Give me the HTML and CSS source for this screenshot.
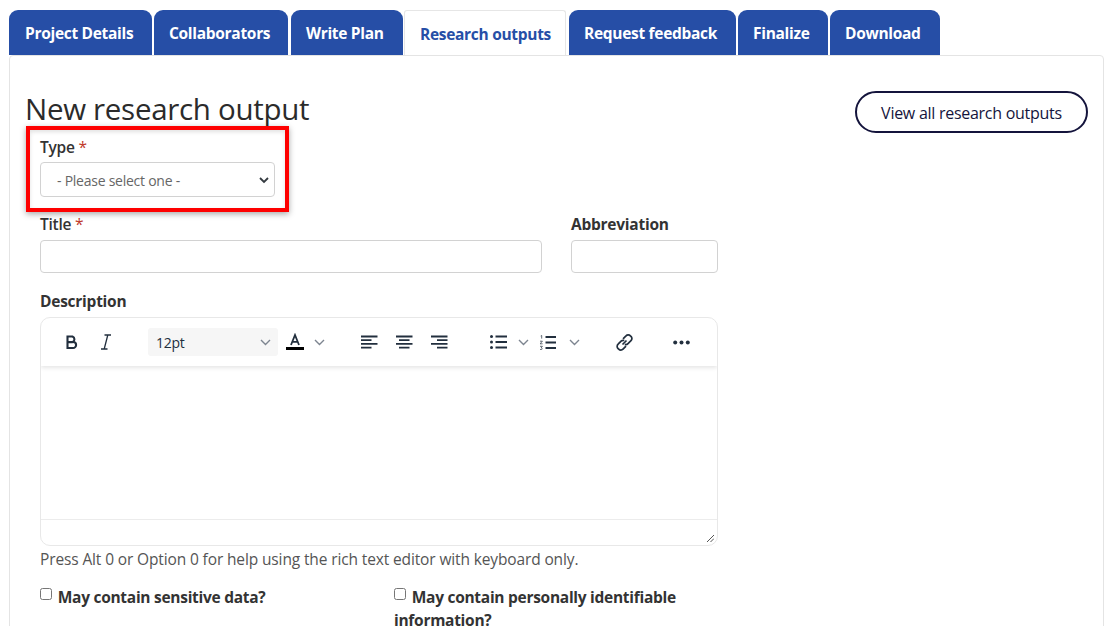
FILE: index.html
```html
<!DOCTYPE html>
<html lang="en">
<head>
<meta charset="utf-8">
<title>New research output</title>
<link rel="stylesheet" href="styles.css">
</head>
<body>
<nav class="tabs">
  <a class="tab t1">Project Details</a>
  <a class="tab t2">Collaborators</a>
  <a class="tab t3">Write Plan</a>
  <a class="tab active t4">Research outputs</a>
  <a class="tab t5">Request feedback</a>
  <a class="tab t6">Finalize</a>
  <a class="tab t7">Download</a>
</nav>
<main class="panel">
  <header class="head">
    <h1>New research output</h1>
    <a class="pill">View all research outputs</a>
  </header>
  <form class="form">
    <div class="field type-field">
      <label class="label">Type <span class="req">*</span></label>
      <div class="select"><span>- Please select one -</span>
        <svg class="sel-chev" width="10" height="7" viewBox="0 0 10 7"><path d="M1 1l4 4 4-4" fill="none" stroke="#343a40" stroke-width="1.8"/></svg>
      </div>
    </div>
    <div class="row-title">
      <div class="field title-field">
        <label class="label">Title <span class="req">*</span></label>
        <div class="input"></div>
      </div>
      <div class="field abbr-field">
        <label class="label strong">Abbreviation</label>
        <div class="input"></div>
      </div>
    </div>
    <div class="desc">
      <label class="label strong">Description</label>
      <div class="editor">
        <div class="toolbar">
          <svg class="ic ic-b" width="16" height="16" viewBox="0 0 16 16"><path d="M3.5 2.5h5a3 3 0 0 1 0 5.6h-5zM3.5 8h5.6a3 3 0 0 1 0 6H3.5z" fill="none" stroke="#222f3e" stroke-width="2.1"/></svg>
          <svg class="ic ic-i" width="12" height="16" viewBox="0 0 12 16"><path d="M4.5 1h6.5M1 15h6.5M7.8 1L4.2 15" fill="none" stroke="#222f3e" stroke-width="1.3"/></svg>
          <div class="fontsize"><span>12pt</span>
            <svg width="11" height="7" viewBox="0 0 11 7"><path d="M1 1l4.5 4.5L10 1" fill="none" stroke="#7d8590" stroke-width="1.4"/></svg>
          </div>
          <svg class="ic ic-a" width="20" height="18" viewBox="0 0 20 18"><path d="M6 12L10 2l4 10M7.4 8.8h5.2" fill="none" stroke="#222f3e" stroke-width="1.8"/><rect x="1" y="14" width="18" height="3" fill="#000"/></svg>
          <svg class="chev c-a" width="11" height="7" viewBox="0 0 11 7"><path d="M1 1l4.5 4.5L10 1" fill="none" stroke="#7d8590" stroke-width="1.4"/></svg>
          <svg class="ic al1" width="17" height="14" viewBox="0 0 17 14"><path d="M0 1.5h16.5M0 5.2h10.5M0 8.9h16.5M0 12.6h10.5" stroke="#222f3e" stroke-width="1.8"/></svg>
          <svg class="ic al2" width="17" height="14" viewBox="0 0 17 14"><path d="M0 1.5h16.5M3 5.2h10.5M0 8.9h16.5M3 12.6h10.5" stroke="#222f3e" stroke-width="1.8"/></svg>
          <svg class="ic al3" width="17" height="14" viewBox="0 0 17 14"><path d="M0 1.5h16.5M6 5.2h10.5M0 8.9h16.5M6 12.6h10.5" stroke="#222f3e" stroke-width="1.8"/></svg>
          <svg class="ic ul" width="17" height="14" viewBox="0 0 17 14"><path d="M5.5 1.5H17M5.5 7H17M5.5 12.5H17" stroke="#222f3e" stroke-width="1.8"/><circle cx="1.5" cy="1.5" r="1.5" fill="#222f3e"/><circle cx="1.5" cy="7" r="1.5" fill="#222f3e"/><circle cx="1.5" cy="12.5" r="1.5" fill="#222f3e"/></svg>
          <svg class="chev c-ul" width="11" height="7" viewBox="0 0 11 7"><path d="M1 1l4.5 4.5L10 1" fill="none" stroke="#7d8590" stroke-width="1.4"/></svg>
          <svg class="ic ol" width="16" height="15" viewBox="0 0 16 15"><path d="M5.5 2H16M5.5 7.5H16M5.5 13H16" stroke="#222f3e" stroke-width="1.8"/><path d="M0.7 1l1-.5V3.6M0 6.2h2.4L0 8.8h2.6M0 11.3h2.4L1.2 12.8h.4a1 1 0 0 1 0 1.8H0" fill="none" stroke="#222f3e" stroke-width=".7"/></svg>
          <svg class="chev c-ol" width="11" height="7" viewBox="0 0 11 7"><path d="M1 1l4.5 4.5L10 1" fill="none" stroke="#7d8590" stroke-width="1.4"/></svg>
          <svg class="ic link" width="19" height="19" viewBox="0 0 19 19"><g fill="none" stroke="#222f3e" stroke-width="1.7"><path d="M8 5.8l3-3a3 3 0 0 1 4.4 0l.6.6a3 3 0 0 1 0 4.3l-3 3a3 3 0 0 1-3.2.7"/><path d="M11 13.2l-3 3a3 3 0 0 1-4.3 0l-.6-.6a3 3 0 0 1 0-4.4l3-3a3 3 0 0 1 3.2-.7"/><path d="M7.5 11.5l4-4"/></g></svg>
          <svg class="ic more" width="17" height="5" viewBox="0 0 17 5"><circle cx="2.2" cy="2.5" r="2" fill="#222f3e"/><circle cx="8.5" cy="2.5" r="2" fill="#222f3e"/><circle cx="14.8" cy="2.5" r="2" fill="#222f3e"/></svg>
        </div>
        <div class="area"></div>
        <div class="status">
          <svg width="8" height="8" viewBox="0 0 8 8"><path d="M1 8l7-7M4.5 8L8 4.5" stroke="#555" stroke-width="1"/></svg>
        </div>
      </div>
      <p class="help">Press Alt 0 or Option 0 for help using the rich text editor with keyboard only.</p>
    </div>
    <div class="checks">
      <label class="check c-left"><span class="box"></span> May contain sensitive data?</label>
      <label class="check c-right"><span class="box"></span> May contain personally identifiable information?</label>
    </div>
  </form>
  <div class="callout"></div>
</main>
</body>
</html>
```
FILE: styles.css
```css
* { box-sizing: border-box; }
html, body { height: 100%; overflow: hidden; }
body {
  margin: 0;
  background: #fff;
  color: #2b2b2b;
  font-family: "Open Sans", "Noto Sans", "Liberation Sans", sans-serif;
  font-size: 15px;
  letter-spacing: -0.25px;
}
.tabs {
  display: flex;
  padding: 10px 0 0 9px;
  height: 55px;
}
.tab {
  display: flex;
  align-items: center;
  justify-content: flex-start;
  height: 45px;
  padding: 1px 0 0 15px;
  background: #264ea6;
  color: #fff;
  border-radius: 9px 9px 0 0;
  font-weight: 700;
  font-size: 15.5px;
  letter-spacing: -0.3px;
}
.t1 { width: 143px; margin-right: 2px; padding-left: 16px; }
.t2 { width: 134px; margin-right: 3px; }
.t3 { width: 112px; margin-right: 1px; }
.t4 { width: 162px; margin-right: 3px; }
.t5 { width: 167px; margin-right: 2px; }
.t6 { width: 90px; margin-right: 2px; }
.t7 { width: 110px; }
.tab.active {
  background: #fff;
  color: #264ea6;
  border: 1px solid #e6e6e6;
  border-bottom: 0;
  border-radius: 3px 3px 0 0;
}
.panel {
  position: relative;
  margin: 0 8px 0 9px;
  height: 640px;
  border: 1px solid #e4e4e4;
  border-radius: 4px;
  padding: 0 15px;
}
.head {
  display: flex;
  justify-content: space-between;
  padding-top: 35px;
  height: 80px;
}
h1 {
  margin: 0;
  font-size: 29.5px;
  line-height: 36px;
  font-weight: 500;
  color: #2b2b2b;
  letter-spacing: -0.3px;
}
.pill {
  display: flex;
  align-items: center;
  justify-content: center;
  width: 233px;
  height: 42px;
  padding-top: 1px;
  border: 2px solid #14143c;
  border-radius: 21px;
  color: #14143c;
  font-size: 16px;
  letter-spacing: -0.27px;
}
.form { padding-left: 15px; }
.label {
  display: block;
  font-weight: 600;
  line-height: 22px;
  font-size: 15.5px;
  color: #333;
}
.label.strong { font-weight: 700; }
.req { color: #c0392b; font-weight: 400; }
.field { display: flex; flex-direction: column; }
.type-field { width: 235px; height: 77px; gap: 4px; }
.select {
  display: flex;
  align-items: center;
  justify-content: space-between;
  height: 35px;
  padding: 1px 5px 0 16px;
  border: 1px solid #d2d2d2;
  border-radius: 4px;
  color: #666;
  font-size: 14px;
}
.row-title {
  display: flex;
  gap: 29px;
  height: 77px;
  width: 678px;
}
.title-field { width: 502px; gap: 5px; }
.abbr-field { width: 147px; gap: 5px; }
.input {
  height: 33px;
  border: 1px solid #d2d2d2;
  border-radius: 4px;
}
.desc { width: 678px; }
.label + .editor { margin-top: 5px; }
.editor {
  display: flex;
  flex-direction: column;
  height: 229px;
  border: 1px solid #e8e8e8;
  border-radius: 10px;
  overflow: hidden;
}
.toolbar {
  position: relative;
  height: 48px;
  display: flex;
  align-items: center;
  box-shadow: 0 2px 4px rgba(0,0,0,.1);
  padding-left: 23px;
}
.ic-b { margin-right: 20px; }
.ic-i { margin-right: 36px; }
.fontsize {
  display: flex;
  align-items: center;
  justify-content: space-between;
  width: 130px;
  height: 28px;
  background: #f6f6f6;
  border-radius: 3px;
  padding: 0 7px 0 8px;
  font-size: 14px;
  color: #222f3e;
  margin-right: 7px;
}
.ic-a { margin-right: 9px; }
.c-a { margin-right: 36px; }
.al1 { margin-right: 18px; }
.al2 { margin-right: 18px; }
.al3 { margin-right: 42px; }
.ul { margin-right: 11px; }
.c-ul { margin-right: 11px; }
.ol { margin-right: 13px; }
.c-ol { margin-right: 35px; }
.link { margin-right: 40px; }
.more { margin-left: -1px; }
.area { flex: 1; }
.status {
  display: flex;
  align-items: flex-end;
  justify-content: flex-end;
  height: 26px;
  border-top: 1px solid #ececec;
  padding: 0 3px 3px 0;
}
.help {
  margin: 3px 0 0;
  line-height: 20px;
  font-size: 15.5px;
  letter-spacing: -0.13px;
  color: #555;
}
.checks {
  display: flex;
  margin-top: 17px;
  width: 690px;
}
.check {
  display: block;
  font-weight: 700;
  line-height: 23px;
  font-size: 15.5px;
  letter-spacing: -0.28px;
  color: #333;
}
.c-left { width: 354px; }
.c-right { width: 310px; }
.box {
  display: inline-block;
  width: 12px;
  height: 12px;
  border: 1px solid #767676;
  border-radius: 2.5px;
  background: #fff;
  margin-right: 2px;
  vertical-align: 3px;
}
.callout {
  position: absolute;
  left: 16px;
  top: 70px;
  width: 263px;
  height: 86px;
  border: 4px solid #fe0000;
  box-shadow: 0 2px 6px rgba(0,0,0,.35), inset 0 2px 4px rgba(0,0,0,.12);
  pointer-events: none;
}
```
